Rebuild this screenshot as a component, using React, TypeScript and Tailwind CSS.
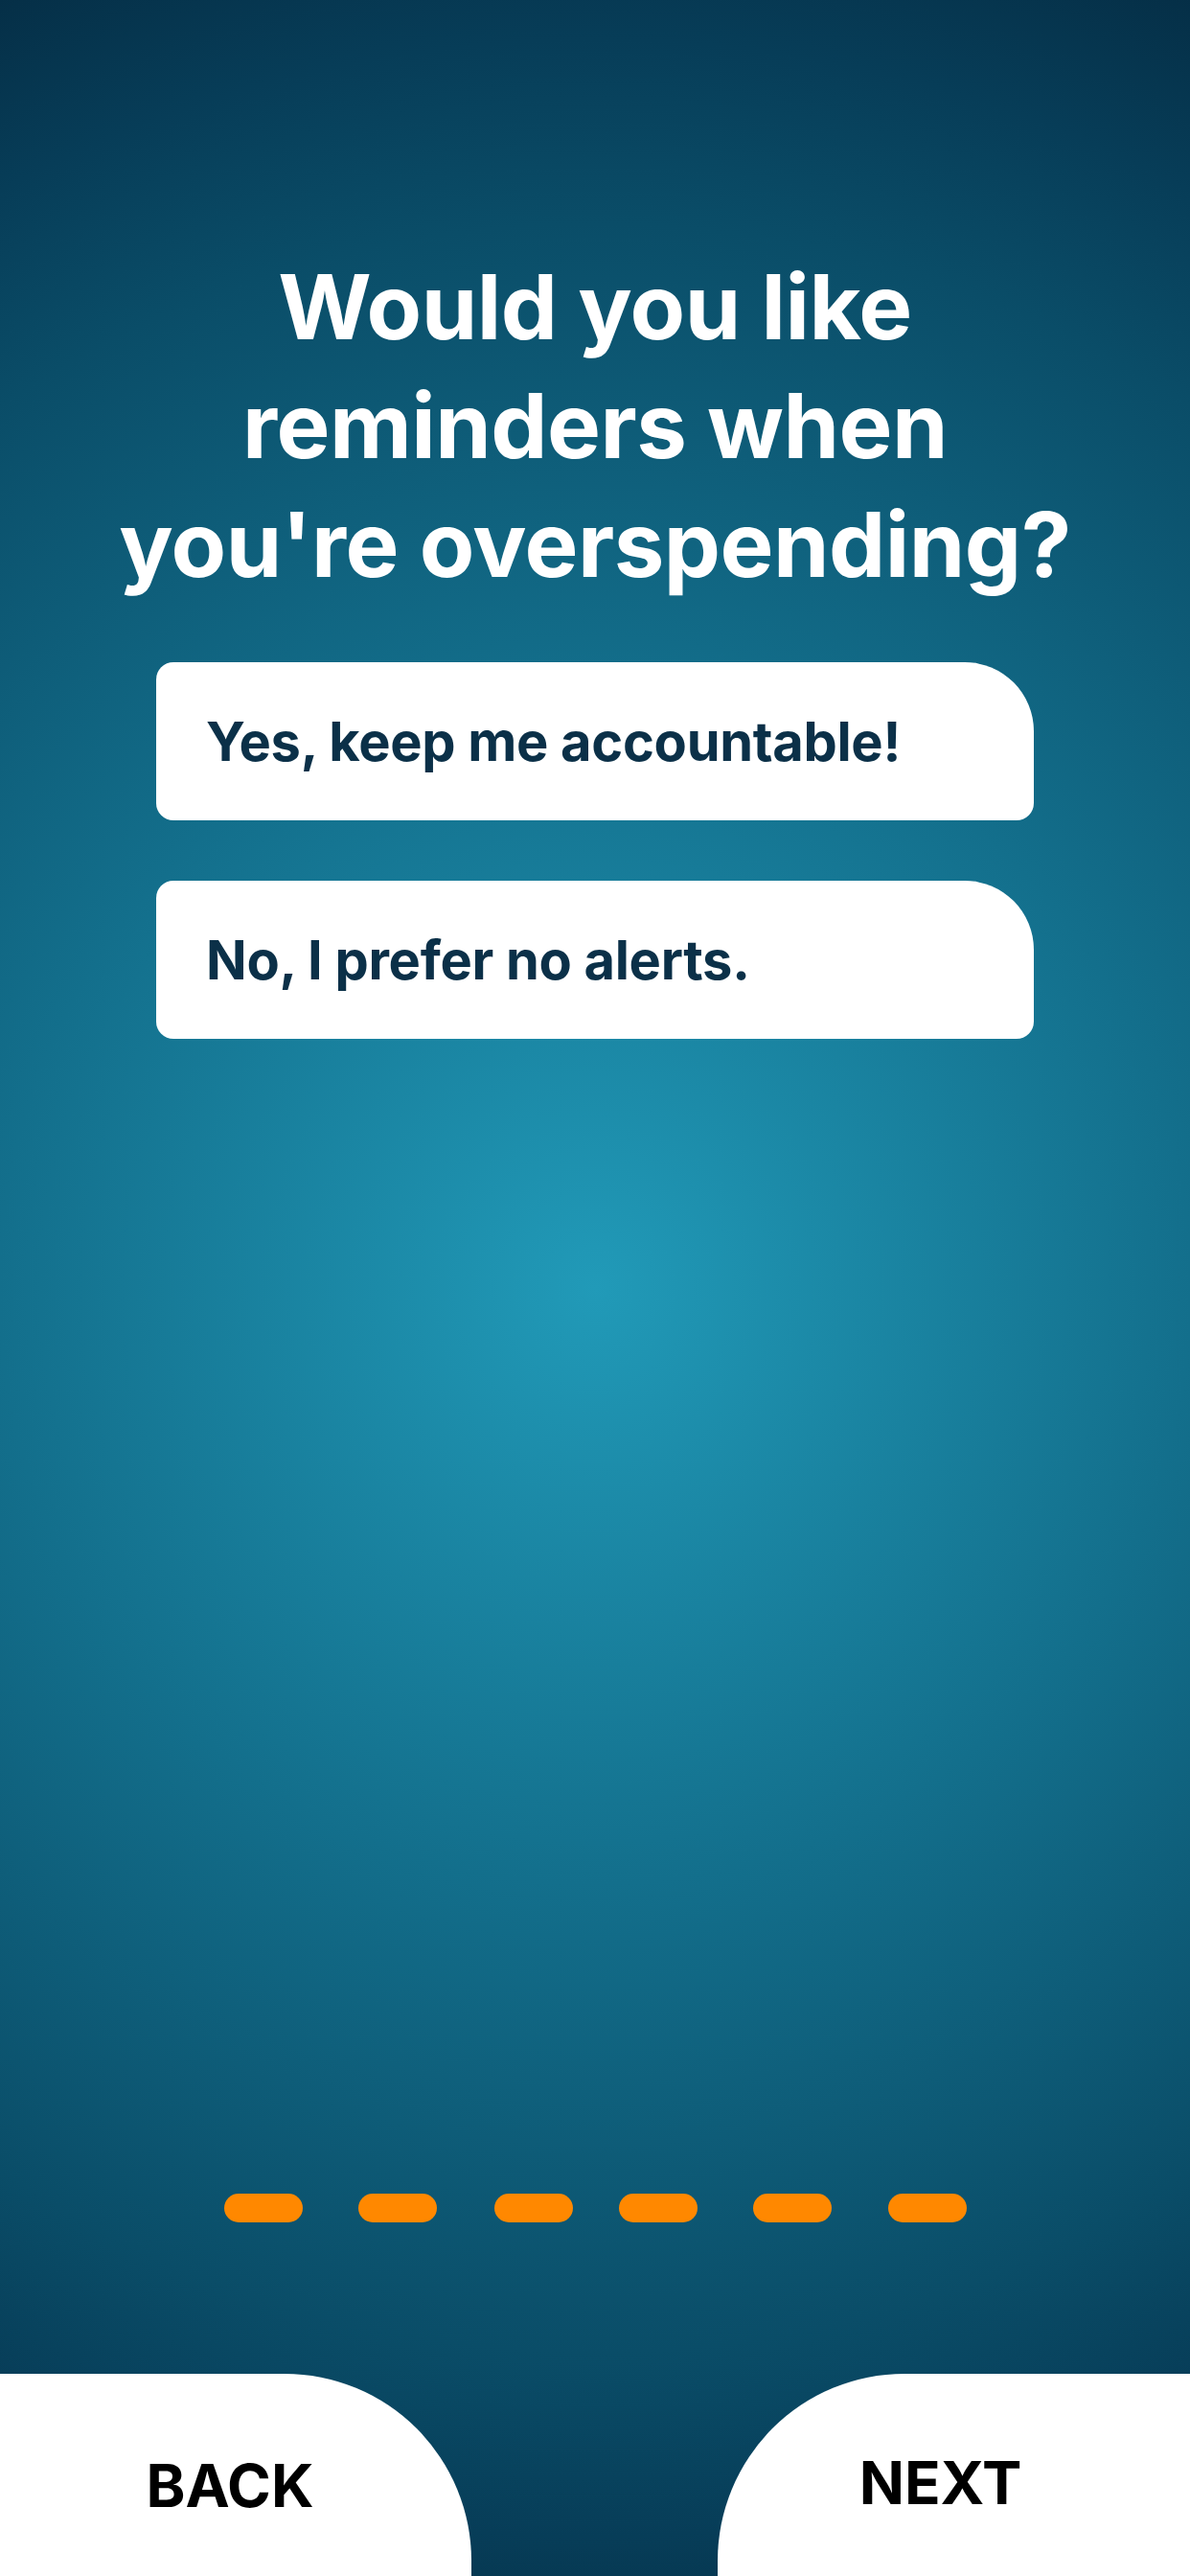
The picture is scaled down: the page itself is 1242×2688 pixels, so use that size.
const options = ['Yes, keep me accountable!', 'No, I prefer no alerts.'];

// spacing between progress dashes is not quite even in the design
const dashGaps = ['', 'ml-[58px]', 'ml-[60px]', 'ml-[48px]', 'ml-[58px]', 'ml-[59px]'];

export default function App() {
  return (
    <div className="min-h-[2688px] w-full flex flex-col items-center bg-[radial-gradient(circle_at_50%_50%,#219ab8_0%,#136f8c_42%,#0a4d68_75%,#073d58_88%,#052f47_100%)] font-['Inter','Liberation_Sans',sans-serif]">
      <h1 className="mt-[258px] text-center text-white font-bold text-[94px] leading-[124px] tracking-[-0.5px]">
        Would you like
        <br />
        reminders when
        <br />
        you're overspending?
      </h1>

      <div className="mt-[61px] w-[916px] flex flex-col gap-[63px]">
        {options.map((opt) => (
          <button
            key={opt}
            className="h-[165px] flex items-center pl-[52px] bg-white rounded-[18px] rounded-tr-[72px] text-left text-[56px] font-bold text-[#0b3048] tracking-[-0.3px]"
          >
            {opt}
          </button>
        ))}
      </div>

      <div className="flex-1" />

      <div className="flex items-center">
        {dashGaps.map((g, i) => (
          <div key={i} className={`${g} w-[82px] h-[30px] rounded-full bg-[#ff8800]`} />
        ))}
      </div>

      <div className="mt-[158px] w-full h-[211px] flex justify-between">
        <button className="w-[492px] h-full bg-white rounded-tr-[195px] flex justify-center items-start pt-[86px] pr-[12px] text-[62px] leading-none font-bold text-black">
          BACK
        </button>
        <button className="w-[493px] h-full bg-white rounded-tl-[195px] flex justify-center items-start pt-[83px] pr-[28px] text-[62px] leading-none font-bold text-black">
          NEXT
        </button>
      </div>
    </div>
  );
}
